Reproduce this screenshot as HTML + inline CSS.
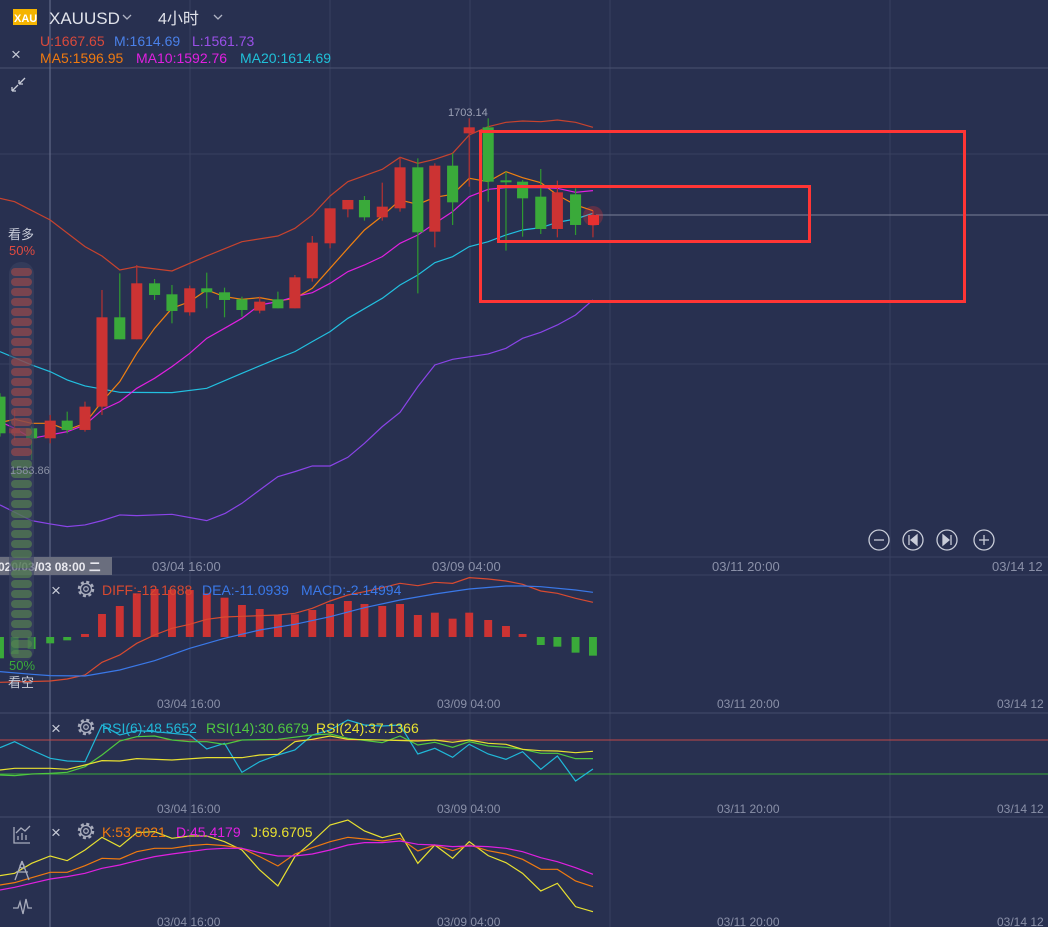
<!DOCTYPE html>
<html><head><meta charset="utf-8"><style>
body{margin:0;background:#283050;width:1048px;height:927px;overflow:hidden;font-family:"Liberation Sans","Noto Sans CJK SC",sans-serif;}
svg{position:absolute;left:0;top:0}
text{font-family:"Liberation Sans","Noto Sans CJK SC",sans-serif}
.l{fill:none;vector-effect:non-scaling-stroke;stroke-width:1.2}
.w{vector-effect:non-scaling-stroke;stroke-width:1.2}
</style></head><body>
<svg width="1048" height="927" viewBox="0 0 1048 927">
<rect width="1048" height="927" fill="#283050"/>
<g stroke="#39415f" stroke-width="1">
<line x1="190" y1="0" x2="190" y2="927"/><line x1="330" y1="0" x2="330" y2="927"/><line x1="470" y1="0" x2="470" y2="927"/><line x1="610" y1="0" x2="610" y2="927"/><line x1="890" y1="0" x2="890" y2="927"/>
<line x1="0" y1="154" x2="1048" y2="154"/><line x1="0" y1="364" x2="1048" y2="364"/>
</g>
<line x1="0" y1="68" x2="1048" y2="68" stroke="#4a5270"/>
<line x1="0" y1="557" x2="1048" y2="557" stroke="#3a4262"/>
<line x1="0" y1="575" x2="1048" y2="575" stroke="#3a4262"/>
<line x1="0" y1="713" x2="1048" y2="713" stroke="#454d6b"/>
<line x1="0" y1="817" x2="1048" y2="817" stroke="#454d6b"/>
<line x1="50" y1="0" x2="50" y2="927" stroke="#6a7290"/>
<line x1="596" y1="215" x2="1048" y2="215" stroke="#7a8098"/>

<g transform="translate(0,100) scale(0.3953,0.3333)">
<polyline class="l" stroke="#c8432e" points="0,295 37,305 127,360 215,440 258,468 303,510 346,500 435,513 523,468 612,425 703,408 746,385 790,345 835,288 880,245 967,208 1012,172 1057,190 1100,178 1145,160 1187,105 1235,80 1280,67 1322,63 1368,65 1410,60 1456,67 1500,82"/>
<polyline class="l" stroke="#22c0e0" points="0,755 80,795 127,815 170,840 215,858 303,877 435,878 523,865 612,820 703,775 746,755 790,725 835,695 880,655 967,595 1012,555 1057,525 1100,488 1145,470 1187,440 1235,425 1280,405 1322,390 1368,383 1410,367 1456,357 1500,340"/>
<polyline class="l" stroke="#8a44e8" points="0,1215 80,1262 127,1272 170,1280 215,1275 258,1262 303,1245 346,1247 435,1243 523,1262 570,1240 612,1210 657,1170 703,1130 746,1115 790,1098 835,1098 880,1072 922,1030 967,980 1012,937 1057,860 1100,795 1145,778 1235,762 1280,745 1322,715 1368,697 1410,675 1456,645 1500,600"/>
<polyline class="l" stroke="#f08010" points="0,968 37,958 80,970 127,970 170,990 215,970 258,905 303,845 346,760 391,685 435,625 480,605 523,570 568,590 612,598 657,593 703,603 746,595 790,565 835,505 880,445 922,390 967,348 1012,300 1057,313 1100,292 1145,283 1187,235 1235,245 1280,215 1322,233 1368,248 1410,285 1456,315 1500,332"/>
<polyline class="l" stroke="#e020e0" points="0,965 37,985 80,1015 127,1005 170,995 215,975 258,930 303,905 346,865 391,835 435,800 480,760 523,715 568,685 612,655 657,615 703,605 746,590 790,578 835,550 880,515 922,495 967,470 1012,430 1057,405 1100,370 1145,335 1187,290 1235,268 1280,263 1368,263 1410,265 1456,277 1500,272"/>
<g stroke="#2f9a30">
<line x1="0" y1="880" x2="0" y2="1010" class="w"/><line x1="80" y1="980" x2="80" y2="1080" class="w"/><line x1="170" y1="935" x2="170" y2="1000" class="w"/><line x1="303" y1="520" x2="303" y2="718" class="w"/><line x1="391" y1="537" x2="391" y2="600" class="w"/><line x1="435" y1="555" x2="435" y2="670" class="w"/><line x1="523" y1="518" x2="523" y2="625" class="w"/><line x1="568" y1="563" x2="568" y2="652" class="w"/><line x1="612" y1="590" x2="612" y2="650" class="w"/><line x1="703" y1="575" x2="703" y2="625" class="w"/><line x1="922" y1="288" x2="922" y2="362" class="w"/><line x1="1057" y1="175" x2="1057" y2="580" class="w"/><line x1="1145" y1="160" x2="1145" y2="375" class="w"/><line x1="1235" y1="55" x2="1235" y2="305" class="w"/><line x1="1280" y1="215" x2="1280" y2="452" class="w"/><line x1="1322" y1="240" x2="1322" y2="410" class="w"/><line x1="1368" y1="207" x2="1368" y2="402" class="w"/><line x1="1456" y1="265" x2="1456" y2="405" class="w"/>
</g>
<g stroke="#b83030">
<line x1="37" y1="930" x2="37" y2="1020" class="w"/><line x1="127" y1="945" x2="127" y2="1030" class="w"/><line x1="215" y1="905" x2="215" y2="995" class="w"/><line x1="258" y1="570" x2="258" y2="945" class="w"/><line x1="346" y1="495" x2="346" y2="718" class="w"/><line x1="480" y1="557" x2="480" y2="647" class="w"/><line x1="657" y1="590" x2="657" y2="640" class="w"/><line x1="746" y1="525" x2="746" y2="625" class="w"/><line x1="790" y1="408" x2="790" y2="545" class="w"/><line x1="835" y1="325" x2="835" y2="445" class="w"/><line x1="880" y1="300" x2="880" y2="352" class="w"/><line x1="967" y1="248" x2="967" y2="362" class="w"/><line x1="1012" y1="172" x2="1012" y2="335" class="w"/><line x1="1100" y1="190" x2="1100" y2="442" class="w"/><line x1="1187" y1="55" x2="1187" y2="260" class="w"/><line x1="1410" y1="242" x2="1410" y2="412" class="w"/><line x1="1500" y1="332" x2="1500" y2="412" class="w"/>
</g>
<g fill="#3aaa3a">
<rect x="-14" y="890" width="28" height="110"/><rect x="66" y="985" width="28" height="30"/><rect x="156" y="962" width="28" height="28"/><rect x="289" y="652" width="28" height="66"/><rect x="377" y="550" width="28" height="35"/><rect x="421" y="583" width="28" height="50"/><rect x="509" y="565" width="28" height="12"/><rect x="554" y="577" width="28" height="23"/><rect x="598" y="598" width="28" height="32"/><rect x="689" y="598" width="28" height="27"/><rect x="908" y="300" width="28" height="52"/><rect x="1043" y="202" width="28" height="195"/><rect x="1131" y="197" width="28" height="110"/><rect x="1221" y="82" width="28" height="163"/><rect x="1266" y="241" width="28" height="6"/><rect x="1308" y="245" width="28" height="50"/><rect x="1354" y="290" width="28" height="97"/><rect x="1442" y="283" width="28" height="92"/>
</g>
<g fill="#cc3333">
<rect x="23" y="985" width="28" height="15"/><rect x="113" y="962" width="28" height="53"/><rect x="201" y="920" width="28" height="70"/><rect x="244" y="652" width="28" height="268"/><rect x="332" y="550" width="28" height="168"/><rect x="466" y="565" width="28" height="72"/><rect x="643" y="605" width="28" height="27"/><rect x="732" y="532" width="28" height="93"/><rect x="776" y="428" width="28" height="107"/><rect x="821" y="325" width="28" height="105"/><rect x="866" y="300" width="28" height="28"/><rect x="953" y="320" width="28" height="32"/><rect x="998" y="202" width="28" height="123"/><rect x="1086" y="197" width="28" height="198"/><rect x="1173" y="82" width="28" height="18"/><rect x="1396" y="277" width="28" height="110"/>
</g>
</g>
<circle cx="593" cy="216" r="10" fill="#ff3030" opacity="0.25"/>
<rect x="588" y="215" width="11" height="10" fill="#e83030"/>
<rect x="480.5" y="131.5" width="484" height="170" fill="none" stroke="#ff3535" stroke-width="3"/>
<rect x="498.5" y="186.5" width="311" height="55" fill="none" stroke="#ff3535" stroke-width="3"/>
<text x="448" y="116" font-size="11" fill="#9aa0b4">1703.14</text>

<g fill="none" stroke="#c8ccd8" stroke-width="1.3">
<circle cx="879" cy="540" r="10"/><line x1="874" y1="540" x2="884" y2="540"/>
<circle cx="913" cy="540" r="10"/><line x1="909" y1="535" x2="909" y2="545"/><path d="M917 535 L911 540 L917 545Z" fill="#c8ccd8"/>
<circle cx="947" cy="540" r="10"/><line x1="951" y1="535" x2="951" y2="545"/><path d="M943 535 L949 540 L943 545Z" fill="#c8ccd8"/>
<circle cx="984" cy="540" r="10"/><line x1="979" y1="540" x2="989" y2="540"/><line x1="984" y1="535" x2="984" y2="545"/>
</g>

<g font-size="13" fill="#8a90a8">
<text x="152" y="571">03/04 16:00</text><text x="432" y="571">03/09 04:00</text><text x="712" y="571">03/11 20:00</text><text x="992" y="571">03/14 12</text>
</g>
<rect x="0" y="557" width="112" height="18" fill="#6a6e7e"/>
<text x="-2" y="571" font-size="12" fill="#e8e8ee" font-weight="bold">020/03/03 08:00 二</text>

<g transform="translate(0,575) scale(0.3953,0.3333)">
<g fill="#3aaa3a"><rect x="-10" y="186" width="20" height="64"/><rect x="27" y="186" width="20" height="51"/><rect x="70" y="186" width="20" height="36"/><rect x="117" y="186" width="20" height="19"/><rect x="160" y="186" width="20" height="10"/><rect x="1358" y="186" width="20" height="24"/><rect x="1400" y="186" width="20" height="29"/><rect x="1446" y="186" width="20" height="47"/><rect x="1490" y="186" width="20" height="56"/></g>
<g fill="#cc3333"><rect x="205" y="177" width="20" height="9"/><rect x="248" y="117" width="20" height="69"/><rect x="293" y="93" width="20" height="93"/><rect x="336" y="55" width="20" height="131"/><rect x="381" y="42" width="20" height="144"/><rect x="425" y="45" width="20" height="141"/><rect x="470" y="45" width="20" height="141"/><rect x="513" y="55" width="20" height="131"/><rect x="558" y="68" width="20" height="118"/><rect x="602" y="90" width="20" height="96"/><rect x="647" y="102" width="20" height="84"/><rect x="693" y="120" width="20" height="66"/><rect x="736" y="118" width="20" height="68"/><rect x="780" y="105" width="20" height="81"/><rect x="825" y="87" width="20" height="99"/><rect x="870" y="78" width="20" height="108"/><rect x="912" y="87" width="20" height="99"/><rect x="957" y="93" width="20" height="93"/><rect x="1002" y="87" width="20" height="99"/><rect x="1047" y="120" width="20" height="66"/><rect x="1090" y="113" width="20" height="73"/><rect x="1135" y="131" width="20" height="55"/><rect x="1177" y="113" width="20" height="73"/><rect x="1225" y="135" width="20" height="51"/><rect x="1270" y="153" width="20" height="33"/><rect x="1312" y="177" width="20" height="9"/></g>
<polyline class="l" stroke="#d84a30" points="0,322 127,318 170,312 215,300 258,262 303,240 346,205 391,180 435,160 480,148 523,133 568,126 612,124 703,120 746,115 790,100 835,78 880,60 922,50 967,38 1012,25 1057,32 1100,22 1145,25 1187,8 1235,12 1280,18 1322,28 1368,48 1410,55 1456,70 1500,82"/>
<polyline class="l" stroke="#3a78e8" points="0,290 80,298 127,302 215,303 303,285 391,257 480,220 568,190 657,165 746,148 835,125 922,98 1012,75 1100,57 1187,42 1280,33 1322,33 1368,35 1456,45 1500,52"/>
</g>
<g font-size="14">
<text x="51" y="596" font-size="17" fill="#c8ccd8">×</text>
<text x="102" y="595" fill="#d84a30">DIFF:-12.1688</text><text x="202" y="595" fill="#3a78e8">DEA:-11.0939</text><text x="301" y="595" fill="#3a78e8">MACD:-2.14994</text>
</g>

<line x1="0" y1="740" x2="1048" y2="740" stroke="#c04848"/>
<line x1="0" y1="774" x2="1048" y2="774" stroke="#3aaa3a"/>
<g transform="translate(0,710) scale(0.3953,0.3333)">
<polyline class="l" stroke="#20b8d8" points="0,113 37,95 80,120 127,145 170,153 215,155 258,45 303,75 346,62 391,65 435,70 480,75 523,117 568,100 612,187 657,155 703,135 746,120 790,75 835,60 880,30 922,45 967,48 1012,45 1057,132 1100,115 1145,142 1187,103 1235,132 1280,148 1322,125 1368,178 1410,138 1456,213 1500,177"/>
<polyline class="l" stroke="#50c840" points="0,195 37,197 80,192 127,190 170,187 215,170 258,135 303,93 346,80 391,78 435,90 480,95 523,95 568,103 612,90 703,88 790,75 835,72 880,85 967,98 1012,78 1057,105 1100,97 1145,112 1187,95 1235,108 1280,112 1322,118 1368,130 1410,130 1456,146 1500,146"/>
<polyline class="l" stroke="#e8e030" points="0,180 37,175 127,175 170,178 215,165 258,152 303,153 346,146 435,150 523,143 612,143 657,135 703,133 746,95 790,88 835,78 880,88 967,90 1057,93 1100,90 1145,97 1187,90 1235,100 1280,103 1322,118 1368,122 1410,123 1456,128 1500,124"/>
<polyline class="l" stroke="#e8e030" points="0,497 37,490 80,460 127,438 170,452 215,420 258,382 303,410 346,368 391,365 435,385 480,378 523,378 568,395 612,420 657,480 703,528 746,440 790,395 835,345 880,330 922,363 967,383 1012,370 1057,460 1100,405 1145,445 1187,395 1235,437 1280,458 1322,490 1368,543 1410,520 1456,590 1500,605"/>
<polyline class="l" stroke="#f07a10" points="0,525 37,518 80,503 127,487 170,487 215,467 258,445 303,447 346,425 391,415 435,415 480,407 523,403 568,407 612,415 657,440 703,468 746,432 790,413 835,395 880,382 922,387 967,393 1012,385 1057,423 1100,405 1145,422 1187,405 1235,422 1280,432 1322,448 1368,478 1410,478 1456,513 1500,530"/>
<polyline class="l" stroke="#e020e0" points="0,540 37,532 80,520 127,507 170,500 215,490 258,475 303,465 346,452 391,440 435,432 480,425 523,418 568,415 612,415 657,428 703,438 746,438 790,432 835,420 880,405 922,398 967,398 1012,393 1057,403 1100,405 1145,410 1187,408 1235,410 1280,415 1322,425 1368,443 1410,455 1456,473 1500,493"/>
</g>
<g font-size="14">
<text x="51" y="734" font-size="17" fill="#c8ccd8">×</text>
<text x="102" y="733" fill="#20b8d8">RSI(6):48.5652</text><text x="206" y="733" fill="#50c840">RSI(14):30.6679</text><text x="316" y="733" fill="#e8e030">RSI(24):37.1366</text>
<text x="51" y="838" font-size="17" fill="#c8ccd8">×</text>
<text x="102" y="837" fill="#f07a10">K:53.5021</text><text x="176" y="837" fill="#e020e0">D:45.4179</text><text x="251" y="837" fill="#e8e030">J:69.6705</text>
</g>
<g font-size="12" fill="#8a90a8">
<text x="157" y="708">03/04 16:00</text><text x="437" y="708">03/09 04:00</text><text x="717" y="708">03/11 20:00</text><text x="997" y="708">03/14 12</text>
<text x="157" y="813">03/04 16:00</text><text x="437" y="813">03/09 04:00</text><text x="717" y="813">03/11 20:00</text><text x="997" y="813">03/14 12</text>
<text x="157" y="926">03/04 16:00</text><text x="437" y="926">03/09 04:00</text><text x="717" y="926">03/11 20:00</text><text x="997" y="926">03/14 12</text>
</g>
<g fill="none" stroke="#a8acbc" stroke-width="1.3">
<circle cx="86" cy="589" r="7" stroke-dasharray="3 2.5" stroke-width="2.5"/><circle cx="86" cy="589" r="5.5"/><circle cx="86" cy="589" r="2.3"/>
<circle cx="86" cy="727" r="7" stroke-dasharray="3 2.5" stroke-width="2.5"/><circle cx="86" cy="727" r="5.5"/><circle cx="86" cy="727" r="2.3"/>
<circle cx="86" cy="831" r="7" stroke-dasharray="3 2.5" stroke-width="2.5"/><circle cx="86" cy="831" r="5.5"/><circle cx="86" cy="831" r="2.3"/>
</g>
<g fill="none" stroke="#a8acbc" stroke-width="1.3">
<path d="M14 827 V843 H30 M18 840 V836 M22 840 V833 M26 840 V835 M16 833 L21 828 L25 831 L30 826"/>
<path d="M22 861 L15 880 M22 861 L29 880 M16 872 H28"/><circle cx="22" cy="866" r="2"/>
<path d="M13 908 H18 L20 902 L23 914 L26 899 L28 908 H32"/>
</g>

<rect x="9" y="262" width="25" height="400" rx="12" fill="#3a4260" opacity="0.6"/>
<g fill="#a84a48" opacity="0.6">
<rect x="11" y="268" width="21" height="8" rx="4"/><rect x="11" y="278" width="21" height="8" rx="4"/><rect x="11" y="288" width="21" height="8" rx="4"/><rect x="11" y="298" width="21" height="8" rx="4"/><rect x="11" y="308" width="21" height="8" rx="4"/><rect x="11" y="318" width="21" height="8" rx="4"/><rect x="11" y="328" width="21" height="8" rx="4"/><rect x="11" y="338" width="21" height="8" rx="4"/><rect x="11" y="348" width="21" height="8" rx="4"/><rect x="11" y="358" width="21" height="8" rx="4"/><rect x="11" y="368" width="21" height="8" rx="4"/><rect x="11" y="378" width="21" height="8" rx="4"/><rect x="11" y="388" width="21" height="8" rx="4"/><rect x="11" y="398" width="21" height="8" rx="4"/><rect x="11" y="408" width="21" height="8" rx="4"/><rect x="11" y="418" width="21" height="8" rx="4"/><rect x="11" y="428" width="21" height="8" rx="4"/><rect x="11" y="438" width="21" height="8" rx="4"/><rect x="11" y="448" width="21" height="8" rx="4"/>
</g>
<g fill="#5a8a50" opacity="0.6">
<rect x="11" y="460" width="21" height="8" rx="4"/><rect x="11" y="470" width="21" height="8" rx="4"/><rect x="11" y="480" width="21" height="8" rx="4"/><rect x="11" y="490" width="21" height="8" rx="4"/><rect x="11" y="500" width="21" height="8" rx="4"/><rect x="11" y="510" width="21" height="8" rx="4"/><rect x="11" y="520" width="21" height="8" rx="4"/><rect x="11" y="530" width="21" height="8" rx="4"/><rect x="11" y="540" width="21" height="8" rx="4"/><rect x="11" y="550" width="21" height="8" rx="4"/><rect x="11" y="560" width="21" height="8" rx="4"/><rect x="11" y="570" width="21" height="8" rx="4"/><rect x="11" y="580" width="21" height="8" rx="4"/><rect x="11" y="590" width="21" height="8" rx="4"/><rect x="11" y="600" width="21" height="8" rx="4"/><rect x="11" y="610" width="21" height="8" rx="4"/><rect x="11" y="620" width="21" height="8" rx="4"/><rect x="11" y="630" width="21" height="8" rx="4"/><rect x="11" y="640" width="21" height="8" rx="4"/><rect x="11" y="650" width="21" height="8" rx="4"/>
</g>
<text x="10" y="474" font-size="11" fill="#8a90a4">1583.86</text>
<text x="8" y="239" font-size="13" fill="#c8ccd8">看多</text>
<text x="9" y="255" font-size="13" fill="#e04a40">50%</text>
<text x="9" y="670" font-size="13" fill="#3aaa3a">50%</text>
<text x="8" y="687" font-size="13" fill="#c8ccd8">看空</text>
<g stroke="#c8ccd8" stroke-width="1.3" fill="none"><path d="M12 91 L18 85 M12 91 V87 M12 91 H16 M25 78 L19 84 M19 84 V80 M19 84 H23"/></g>

<rect x="13" y="9" width="24" height="16" fill="#f5b400"/>
<text x="14" y="22" font-size="11" font-weight="bold" fill="#fff">XAU</text>
<text x="49" y="24" font-size="17" fill="#e0e2ea">XAUUSD</text>
<path d="M123 15 L127 19 L131 15" stroke="#b0b4c4" fill="none" stroke-width="1.3"/>
<text x="158" y="24" font-size="16" fill="#e0e2ea">4小时</text>
<path d="M214 15 L218 19 L222 15" stroke="#b0b4c4" fill="none" stroke-width="1.3"/>
<g font-size="14">
<text x="40" y="46" fill="#d9493b">U:1667.65</text><text x="114" y="46" fill="#4a80e8">M:1614.69</text><text x="192" y="46" fill="#9a50e8">L:1561.73</text>
<text x="40" y="63" fill="#f07a10">MA5:1596.95</text><text x="136" y="63" fill="#e020e0">MA10:1592.76</text><text x="240" y="63" fill="#20c0d8">MA20:1614.69</text>
<text x="11" y="60" font-size="17" fill="#c8ccd8">×</text>
</g>
</svg>
</body></html>
